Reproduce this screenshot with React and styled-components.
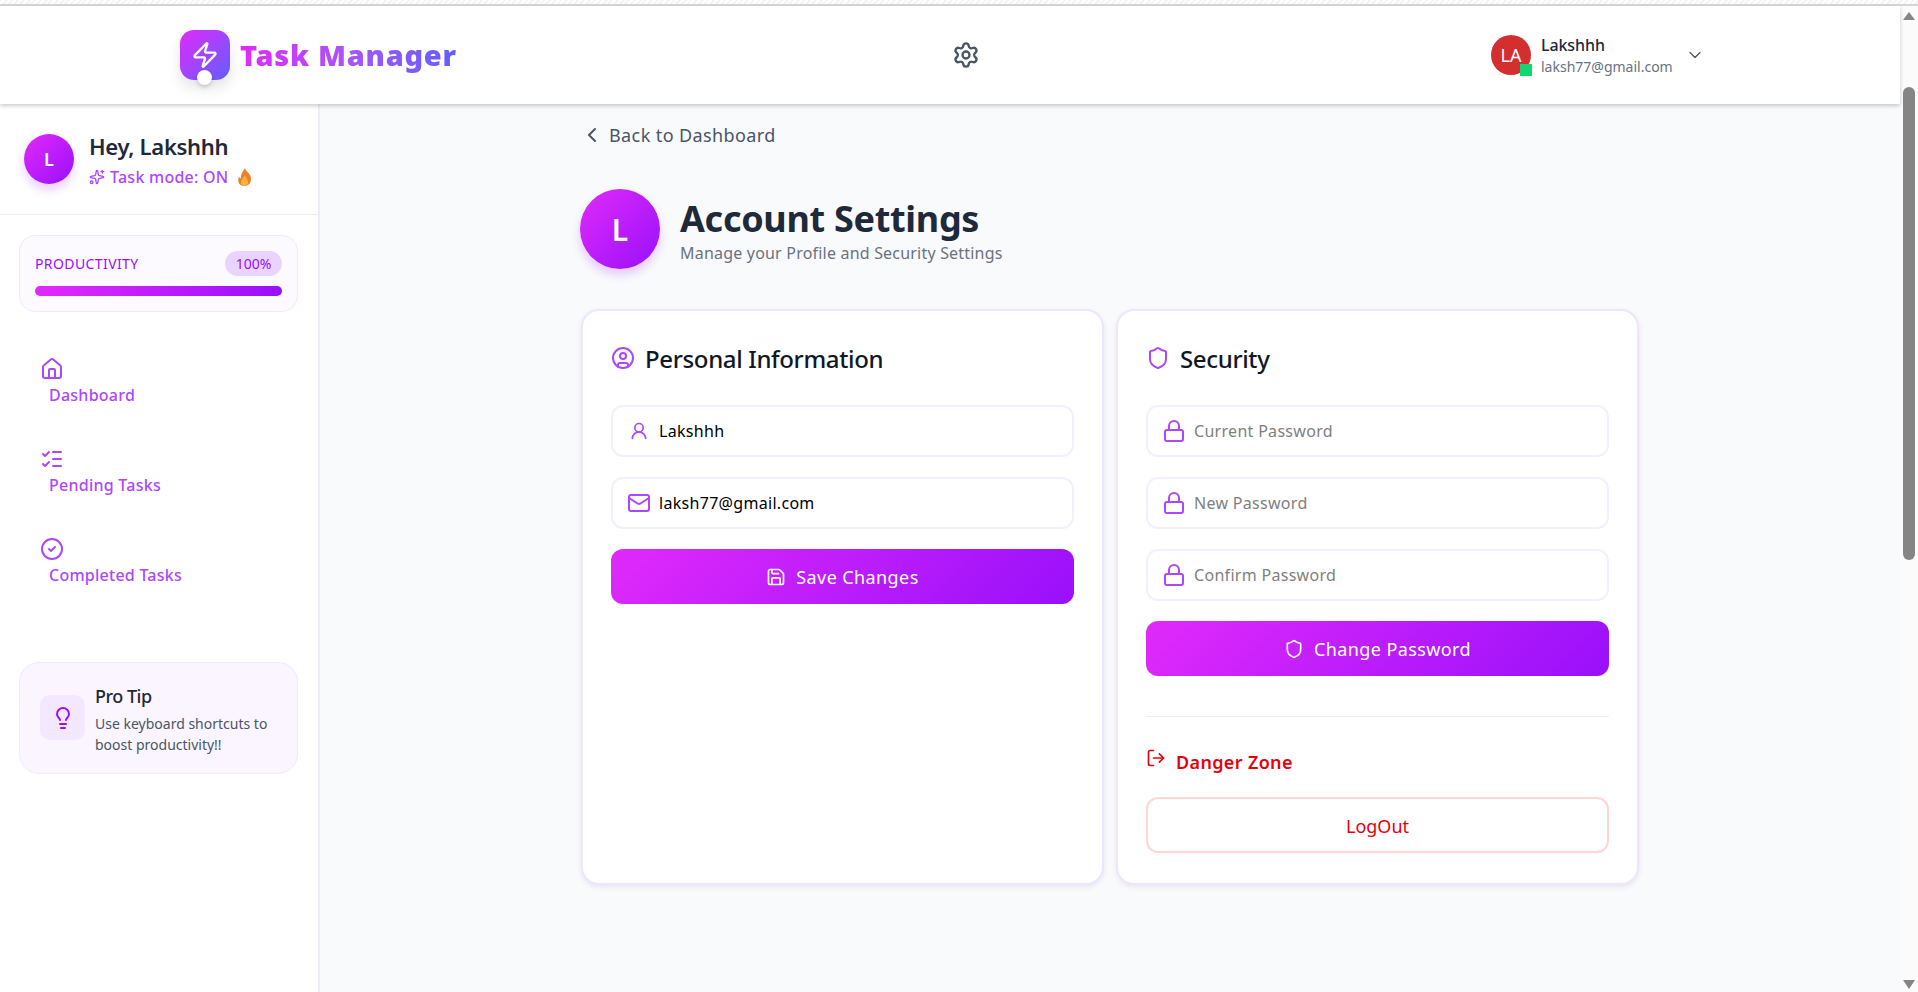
import styled, { createGlobalStyle } from "styled-components";
import {
  ChevronDown,
  ChevronLeft,
  CircleCheck,
  CircleUser,
  House,
  Lightbulb,
  ListChecks,
  Lock,
  LogOut,
  Mail,
  Save,
  Settings,
  Shield,
  Sparkles,
  UserRound,
  Zap,
} from "lucide-react";

const GlobalStyle = createGlobalStyle`
  * { box-sizing: border-box; }
  html, body { margin: 0; height: 100%; overflow: hidden; }
  body {
    font-family: "Noto Sans", "Open Sans", sans-serif;
    background: #f9fafb;
    color: #1e2939;
  }
`;

const bar = "linear-gradient(90deg, #e12afb 0%, #9810fa 100%)";
const brand = "linear-gradient(135deg, #e12afb 0%, #9810fa 100%)";

const Page = styled.div`
  display: flex;
  flex-direction: column;
  height: 992px;
  overflow: hidden;
`;
const TopStrip = styled.div`
  flex: none;
  height: 6px;
  border-bottom: 2px solid #d6d6d6;
  background: repeating-linear-gradient(135deg, #f4f4f4 0 2px, #ffffff 2px 4px);
`;
const Viewport = styled.div`
  flex: 1;
  display: flex;
  min-height: 0;
`;
const Frame = styled.div`
  flex: 1;
  display: flex;
  flex-direction: column;
  min-width: 0;
`;
const Header = styled.header`
  flex: none;
  height: 98px;
  padding-left: 180px;
  display: grid;
  grid-template-columns: 772px 539px auto;
  align-items: center;
  background: #fff;
  box-shadow: 0 2px 4px rgba(0, 0, 0, 0.2);
  position: relative;
  z-index: 2;
`;
const Brand = styled.div`
  display: flex;
  align-items: center;
  gap: 10px;
`;
const LogoTile = styled.div`
  position: relative;
  width: 50px;
  height: 50px;
  border-radius: 14px;
  display: flex;
  align-items: center;
  justify-content: center;
  color: #fff;
  background: linear-gradient(135deg, #e12afb 0%, #615fff 100%);
  box-shadow: 0 8px 14px rgba(0, 0, 0, 0.1);
`;
const LogoDot = styled.span`
  position: absolute;
  left: 17px;
  bottom: -5px;
  width: 15px;
  height: 15px;
  border-radius: 50%;
  background: #fff;
  box-shadow: 0 2px 4px rgba(0, 0, 0, 0.18);
`;
const BrandName = styled.h1`
  margin: 0;
  font-size: 29px;
  line-height: 36px;
  font-weight: 900;
  letter-spacing: 0.7px;
  background: linear-gradient(90deg, #e12afb 0%, #a855f7 50%, #615fff 100%);
  -webkit-background-clip: text;
  background-clip: text;
  color: transparent;
`;
const GearButton = styled.div`
  display: flex;
  color: #4a5565;
`;
const UserChip = styled.div`
  display: flex;
  align-items: center;
`;
const ChipAvatar = styled.div`
  position: relative;
  width: 40px;
  height: 40px;
  border-radius: 50%;
  background: #d32f2f;
  color: #fff;
  font-size: 18px;
  display: flex;
  align-items: center;
  justify-content: center;
`;
const OnlineMark = styled.span`
  position: absolute;
  right: -1px;
  bottom: -1px;
  width: 12px;
  height: 12px;
  background: #12d670;
`;
const ChipText = styled.div`
  margin-left: 10px;
  display: flex;
  flex-direction: column;
`;
const ChipName = styled.span`
  font-size: 16px;
  line-height: 24px;
  font-weight: 500;
  letter-spacing: -0.1px;
`;
const ChipMail = styled.span`
  font-size: 14px;
  line-height: 20px;
  color: #6a7282;
`;
const ChipCaret = styled.div`
  display: flex;
  margin-left: 12px;
  color: #4a5565;
`;

const Body = styled.div`
  flex: 1;
  display: flex;
  min-height: 0;
`;
const Sidebar = styled.aside`
  flex: none;
  width: 320px;
  background: #fff;
  border-right: 2px solid #f1eafc;
`;
const Greeting = styled.div`
  height: 111px;
  padding: 30px 24px 0;
  display: flex;
  gap: 15px;
  border-bottom: 1px solid #f3e8ff;
`;
const Disc = styled.div`
  flex: none;
  width: ${(p) => p.$size}px;
  height: ${(p) => p.$size}px;
  border-radius: 50%;
  background: ${brand};
  color: #fff;
  font-weight: 600;
  font-size: ${(p) => p.$text}px;
  display: flex;
  align-items: center;
  justify-content: center;
  box-shadow: 0 6px 10px rgba(152, 16, 250, 0.2);
`;
const GreetingText = styled.div`
  margin-top: -2px;
  display: flex;
  flex-direction: column;
`;
const GreetingName = styled.div`
  font-size: 22px;
  line-height: 28px;
  font-weight: 600;
  letter-spacing: -0.3px;
`;
const TaskMode = styled.div`
  margin-top: 5px;
  display: flex;
  align-items: center;
  gap: 5px;
  color: #ad46ff;
  font-size: 16px;
  line-height: 24px;
  font-weight: 500;
  letter-spacing: 0.25px;
`;
const FlameWrap = styled.span`
  display: flex;
  margin-left: 3px;
`;
const ProgressCard = styled.section`
  margin: 20px 20px 0 19px;
  height: 77px;
  padding: 15px;
  border: 1px solid #f3e8ff;
  border-radius: 16px;
  background: #fcf9ff;
`;
const ProgressHead = styled.div`
  display: flex;
  justify-content: space-between;
  align-items: center;
  color: #9810fa;
  font-size: 14px;
  letter-spacing: 0.4px;
`;
const Percent = styled.span`
  width: 57px;
  height: 25px;
  border-radius: 13px;
  background: #e9d4ff;
  color: #9810fa;
  letter-spacing: 0;
  display: flex;
  align-items: center;
  justify-content: center;
`;
const Track = styled.div`
  margin-top: 10px;
  height: 10px;
  border-radius: 5px;
  background: #f3e8ff;
  overflow: hidden;
`;
const Fill = styled.div`
  height: 100%;
  background: ${bar};
`;
const SideNav = styled.nav`
  margin: 45px 0 0 40px;
  display: flex;
  flex-direction: column;
  gap: 40px;
`;
const SideLink = styled.a`
  display: flex;
  flex-direction: column;
  gap: 2px;
  color: #ad46ff;
  font-size: 16px;
  line-height: 24px;
  font-weight: 500;
  letter-spacing: 0.25px;
`;
const SideLabel = styled.span`
  margin-left: 9px;
`;
const TipCard = styled.section`
  margin: 75px 20px 0 19px;
  height: 112px;
  padding: 32px 20px 0;
  display: flex;
  gap: 10px;
  border: 1px solid #f3e8ff;
  border-radius: 20px;
  background: #faf5ff;
`;
const TipIcon = styled.div`
  flex: none;
  width: 45px;
  height: 45px;
  border-radius: 10px;
  background: #f3e8ff;
  color: #9810fa;
  display: flex;
  align-items: center;
  justify-content: center;
`;
const TipText = styled.div`
  margin-top: -11px;
`;
const TipTitle = styled.div`
  font-size: 18px;
  line-height: 24px;
  font-weight: 500;
  letter-spacing: -0.5px;
`;
const TipBody = styled.div`
  margin-top: 5px;
  font-size: 14px;
  line-height: 21px;
  color: #4a5565;
`;

const Content = styled.main`
  flex: 1;
  min-width: 0;
  background: #f9fafb;
  display: flex;
  justify-content: center;
`;
const Column = styled.div`
  width: 1060px;
`;
const BackLink = styled.a`
  margin-top: 17px;
  display: flex;
  align-items: center;
  gap: 5px;
  height: 27px;
  color: #4a5565;
  font-size: 18px;
  letter-spacing: 0.4px;
`;
const PageHead = styled.div`
  margin-top: 41px;
  display: flex;
  align-items: center;
  gap: 20px;
`;
const TitleBlock = styled.div`
  padding-top: 3px;
`;
const PageTitle = styled.h2`
  margin: 0;
  font-size: 36px;
  line-height: 44px;
  font-weight: 700;
  letter-spacing: -0.3px;
`;
const PageSub = styled.p`
  margin: 1px 0 0;
  font-size: 16px;
  line-height: 22px;
  color: #6a7282;
  letter-spacing: 0.2px;
`;
const CardGrid = styled.div`
  margin: 40px 1px 0;
  display: grid;
  grid-template-columns: 1fr 1fr;
  gap: 12px;
`;
const Card = styled.section`
  height: 576px;
  padding: 29px 28px 0;
  background: #fff;
  border: 2px solid #efe6fc;
  border-radius: 18px;
  box-shadow: 0 2px 5px rgba(110, 70, 190, 0.12);
`;
const CardHead = styled.h3`
  margin: 0 0 29px;
  height: 36px;
  display: flex;
  align-items: center;
  gap: 10px;
  font-size: 24px;
  font-weight: 500;
  letter-spacing: -0.35px;
  color: #101828;
`;
const Stack = styled.div`
  display: flex;
  flex-direction: column;
  gap: 20px;
`;
const Field = styled.label`
  height: 52px;
  padding-left: 14px;
  display: flex;
  align-items: center;
  gap: 8px;
  border: 2px solid #f5eeff;
  border-radius: 12px;
  color: #ad46ff;
`;
const FieldIcon = styled.span`
  flex: none;
  width: 24px;
  display: flex;
  justify-content: center;
`;
const FieldInput = styled.input`
  flex: 1;
  min-width: 0;
  border: 0;
  outline: 0;
  padding: 0;
  background: none;
  font: inherit;
  font-size: 16px;
  letter-spacing: 0.3px;
  color: #000;
  &::placeholder {
    color: #7f7f7f;
    opacity: 1;
  }
`;
const PrimaryButton = styled.button`
  height: 55px;
  border: 0;
  border-radius: 12px;
  background: ${brand};
  color: #fff;
  font: inherit;
  font-size: 18px;
  letter-spacing: 0.4px;
  display: flex;
  align-items: center;
  justify-content: center;
  gap: 10px;
`;
const Rule = styled.hr`
  margin: 40px 0 0;
  border: 0;
  border-top: 1px solid #f3e8ff;
`;
const DangerHead = styled.div`
  margin-top: 31px;
  display: flex;
  align-items: flex-start;
  gap: 10px;
  color: #e7000b;
  font-size: 18px;
  line-height: 28px;
  font-weight: 600;
  letter-spacing: 0.35px;
`;
const LogoutButton = styled.button`
  margin-top: 21px;
  width: 100%;
  height: 56px;
  padding: 2px 0 0;
  border: 2px solid #ffd6d6;
  border-radius: 12px;
  background: #fff;
  color: #e7000b;
  font: inherit;
  font-size: 18px;
`;

const ScrollRail = styled.div`
  flex: none;
  width: 18px;
  display: flex;
  flex-direction: column;
  align-items: center;
  background: #fbfbfb;
`;
const ScrollUp = styled.div`
  flex: none;
  margin-top: 6px;
  width: 0;
  height: 0;
  border-left: 6px solid transparent;
  border-right: 6px solid transparent;
  border-bottom: 8px solid #858585;
`;
const ScrollDown = styled.div`
  flex: none;
  margin: auto 0 3px;
  width: 0;
  height: 0;
  border-left: 6px solid transparent;
  border-right: 6px solid transparent;
  border-top: 9px solid #858585;
`;
const ScrollThumb = styled.div`
  margin-top: 67px;
  width: 12px;
  height: 473px;
  border-radius: 6px;
  background: #858585;
`;

function Flame() {
  return (
    <svg width="15" height="18" viewBox="0 0 15 18">
      <path
        d="M8 0c.5 3 4 4.500 5.500 8 1.200 3 .5 10-6 10S.5 12.500 2 8.500c.5 1 1 1.500 2 2C3.500 6.500 6 3.500 8 0z"
        fill="#ee7f2d"
      />
      <path
        d="M7.500 7c.5 2 3.500 4 3.500 7 0 2.500-1.500 4-3.500 4S4 16.500 4 14.500c0-3 3-4.500 3.500-7.500z"
        fill="#fcb13f"
      />
    </svg>
  );
}

export default function App() {
  return (
    <Page>
      <GlobalStyle />
      <TopStrip />
      <Viewport>
        <Frame>
          <Header>
            <Brand>
              <LogoTile>
                <Zap size={28} strokeWidth={2} />
                <LogoDot />
              </LogoTile>
              <BrandName>Task Manager</BrandName>
            </Brand>
            <GearButton>
              <Settings size={28} strokeWidth={2} />
            </GearButton>
            <UserChip>
              <ChipAvatar>
                LA
                <OnlineMark />
              </ChipAvatar>
              <ChipText>
                <ChipName>Lakshhh</ChipName>
                <ChipMail>laksh77@gmail.com</ChipMail>
              </ChipText>
              <ChipCaret>
                <ChevronDown size={20} strokeWidth={1.5} />
              </ChipCaret>
            </UserChip>
          </Header>
          <Body>
            <Sidebar>
              <Greeting>
                <Disc $size={50} $text={18}>L</Disc>
                <GreetingText>
                  <GreetingName>Hey, Lakshhh</GreetingName>
                  <TaskMode>
                    <Sparkles size={16} />
                    Task mode: ON
                    <FlameWrap>
                      <Flame />
                    </FlameWrap>
                  </TaskMode>
                </GreetingText>
              </Greeting>
              <ProgressCard>
                <ProgressHead>
                  PRODUCTIVITY
                  <Percent>100%</Percent>
                </ProgressHead>
                <Track>
                  <Fill />
                </Track>
              </ProgressCard>
              <SideNav>
                <SideLink>
                  <House size={24} />
                  <SideLabel>Dashboard</SideLabel>
                </SideLink>
                <SideLink>
                  <ListChecks size={24} />
                  <SideLabel>Pending Tasks</SideLabel>
                </SideLink>
                <SideLink>
                  <CircleCheck size={24} />
                  <SideLabel>Completed Tasks</SideLabel>
                </SideLink>
              </SideNav>
              <TipCard>
                <TipIcon>
                  <Lightbulb size={24} />
                </TipIcon>
                <TipText>
                  <TipTitle>Pro Tip</TipTitle>
                  <TipBody>
                    Use keyboard shortcuts to
                    <br />
                    boost productivity!!
                  </TipBody>
                </TipText>
              </TipCard>
            </Sidebar>
            <Content>
              <Column>
                <BackLink>
                  <ChevronLeft size={24} />
                  Back to Dashboard
                </BackLink>
                <PageHead>
                  <Disc $size={80} $text={30}>L</Disc>
                  <TitleBlock>
                    <PageTitle>Account Settings</PageTitle>
                    <PageSub>Manage your Profile and Security Settings</PageSub>
                  </TitleBlock>
                </PageHead>
                <CardGrid>
                  <Card>
                    <CardHead>
                      <CircleUser size={24} color="#ad46ff" />
                      Personal Information
                    </CardHead>
                    <Stack>
                      <Field>
                        <FieldIcon>
                          <UserRound size={20} />
                        </FieldIcon>
                        <FieldInput value="Lakshhh" readOnly />
                      </Field>
                      <Field>
                        <FieldIcon>
                          <Mail size={24} />
                        </FieldIcon>
                        <FieldInput value="laksh77@gmail.com" readOnly />
                      </Field>
                      <PrimaryButton>
                        <Save size={20} />
                        Save Changes
                      </PrimaryButton>
                    </Stack>
                  </Card>
                  <Card>
                    <CardHead>
                      <Shield size={24} color="#ad46ff" />
                      Security
                    </CardHead>
                    <Stack>
                      <Field>
                        <FieldIcon>
                          <Lock size={24} />
                        </FieldIcon>
                        <FieldInput placeholder="Current Password" />
                      </Field>
                      <Field>
                        <FieldIcon>
                          <Lock size={24} />
                        </FieldIcon>
                        <FieldInput placeholder="New Password" />
                      </Field>
                      <Field>
                        <FieldIcon>
                          <Lock size={24} />
                        </FieldIcon>
                        <FieldInput placeholder="Confirm Password" />
                      </Field>
                      <PrimaryButton>
                        <Shield size={20} />
                        Change Password
                      </PrimaryButton>
                    </Stack>
                    <Rule />
                    <DangerHead>
                      <LogOut size={20} />
                      Danger Zone
                    </DangerHead>
                    <LogoutButton>LogOut</LogoutButton>
                  </Card>
                </CardGrid>
              </Column>
            </Content>
          </Body>
        </Frame>
        <ScrollRail>
          <ScrollUp />
          <ScrollThumb />
          <ScrollDown />
        </ScrollRail>
      </Viewport>
    </Page>
  );
}
